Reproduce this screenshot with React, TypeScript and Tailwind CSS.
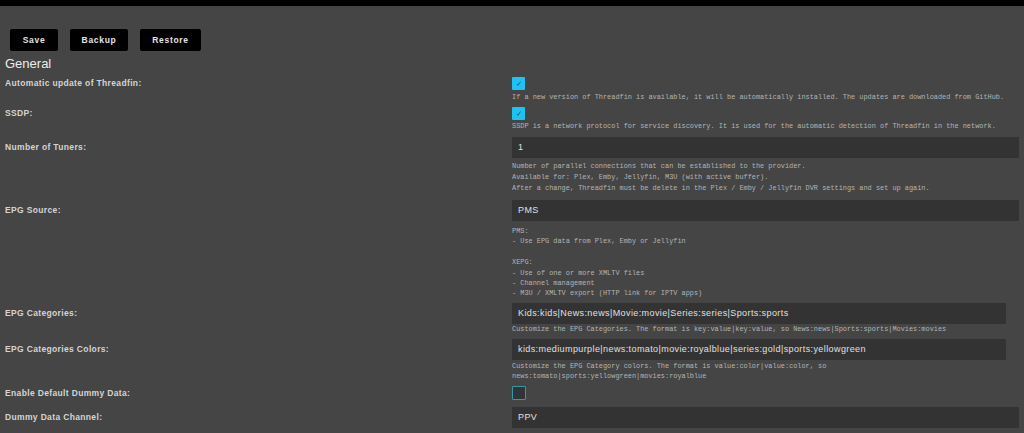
import React from "react";

const sans = "font-['Liberation_Sans',Arial,sans-serif]";
const mono = "font-['Liberation_Mono','Courier_New',monospace]";

function Checked() {
  return (
    <div className="w-[13px] h-[13px] bg-[#1ec3f2] rounded-[1px] flex items-center justify-center">
      <svg width="7" height="7" viewBox="0 0 10 10">
        <path d="M2.5 5.5 L4.3 7.6 L7.8 2.2" fill="none" stroke="#1b4f8a" strokeWidth="1.2" />
      </svg>
    </div>
  );
}

function Label({ text, h }: { text: string; h: string }) {
  return (
    <div className={`w-[512px] shrink-0 pl-[5px] text-[8.5px] font-bold tracking-[0.35px] text-[#d4d4d4] ${h}`}>
      {text}
    </div>
  );
}

function Input({ value, w }: { value: string; w?: string }) {
  return (
    <div
      className={`h-[21px] bg-[#333333] flex items-center pl-[6px] text-[9px] tracking-[0.4px] text-[#e0e0e0] ${w ?? "w-[507px]"}`}
    >
      {value}
    </div>
  );
}

function Desc({ lines, cls }: { lines: string[]; cls: string }) {
  return (
    <div className={`${mono} text-[6.9px] text-[#b4b4b4] whitespace-pre ${cls}`}>
      {lines.map((l, i) => (
        <div key={i}>{l === "" ? "\u00a0" : l}</div>
      ))}
    </div>
  );
}

export default function App() {
  return (
    <div className={`w-[1024px] h-[433px] overflow-hidden bg-[#454545] ${sans}`}>
      <div className="h-[6px] bg-black" />
      <div className="flex gap-[12px] pl-[10px] pt-[23px]">
        {[
          ["Save", "w-[48px]"],
          ["Backup", "w-[58px]"],
          ["Restore", "w-[61px]"],
        ].map(([t, w]) => (
          <div
            key={t}
            className={`${w} h-[22px] bg-black rounded-[2px] flex items-center justify-center text-[8.5px] font-bold tracking-[0.7px] text-[#e4e4e4]`}
          >
            {t}
          </div>
        ))}
      </div>
      <div className="pl-[5px] mt-[5px] text-[13px] leading-[16px] text-[#ececec]">General</div>

      {/* Automatic update */}
      <div className="flex mt-[5px]">
        <Label text="Automatic update of Threadfin:" h="leading-[13px]" />
        <div>
          <Checked />
          <Desc
            cls="mt-[2px] leading-[10px]"
            lines={[
              "If a new version of Threadfin is available, it will be automatically installed. The updates are downloaded from GitHub.",
            ]}
          />
        </div>
      </div>

      {/* SSDP */}
      <div className="flex mt-[5px]">
        <Label text="SSDP:" h="leading-[13px]" />
        <div>
          <Checked />
          <Desc
            cls="mt-[1px] leading-[10px]"
            lines={[
              "SSDP is a network protocol for service discovery. It is used for the automatic detection of Threadfin in the network.",
            ]}
          />
        </div>
      </div>

      {/* Tuners */}
      <div className="flex mt-[6px]">
        <Label text="Number of Tuners:" h="leading-[21px]" />
        <div>
          <Input value="1" />
          <Desc
            cls="mt-[3px] leading-[11px]"
            lines={[
              "Number of parallel connections that can be established to the provider.",
              "Available for: Plex, Emby, Jellyfin, M3U (with active buffer).",
              "After a change, Threadfin must be delete in the Plex / Emby / Jellyfin DVR settings and set up again.",
            ]}
          />
        </div>
      </div>

      {/* EPG Source */}
      <div className="flex mt-[6px]">
        <Label text="EPG Source:" h="leading-[21px]" />
        <div>
          <Input value="PMS" />
          <Desc
            cls="mt-[5px] leading-[10.4px]"
            lines={[
              "PMS:",
              "- Use EPG data from Plex, Emby or Jellyfin",
              "",
              "XEPG:",
              "- Use of one or more XMLTV files",
              "- Channel management",
              "- M3U / XMLTV export (HTTP link for IPTV apps)",
            ]}
          />
        </div>
      </div>

      {/* EPG Categories */}
      <div className="flex mt-[4px]">
        <Label text="EPG Categories:" h="leading-[21px]" />
        <div>
          <Input value="Kids:kids|News:news|Movie:movie|Series:series|Sports:sports" w="w-[494px]" />
          <Desc
            cls="mt-[0px] leading-[10px]"
            lines={[
              "Customize the EPG Categories. The format is key:value|key:value, so News:news|Sports:sports|Movies:movies",
            ]}
          />
        </div>
      </div>

      {/* EPG Categories Colors */}
      <div className="flex mt-[5px]">
        <Label text="EPG Categories Colors:" h="leading-[21px]" />
        <div>
          <Input
            value="kids:mediumpurple|news:tomato|movie:royalblue|series:gold|sports:yellowgreen"
            w="w-[494px]"
          />
          <Desc
            cls="mt-[1px] leading-[10.5px]"
            lines={[
              "Customize the EPG Category colors. The format is value:color|value:color, so",
              "news:tomato|sports:yellowgreen|movies:royalblue",
            ]}
          />
        </div>
      </div>

      {/* Dummy data */}
      <div className="flex mt-[4px]">
        <Label text="Enable Default Dummy Data:" h="leading-[14px]" />
        <div className="w-[14px] h-[14px] border-[1.5px] border-[#3a98a6] bg-[#2f3538] rounded-[1px]" />
      </div>

      {/* Dummy channel */}
      <div className="flex mt-[7px]">
        <Label text="Dummy Data Channel:" h="leading-[21px]" />
        <Input value="PPV" />
      </div>
    </div>
  );
}
